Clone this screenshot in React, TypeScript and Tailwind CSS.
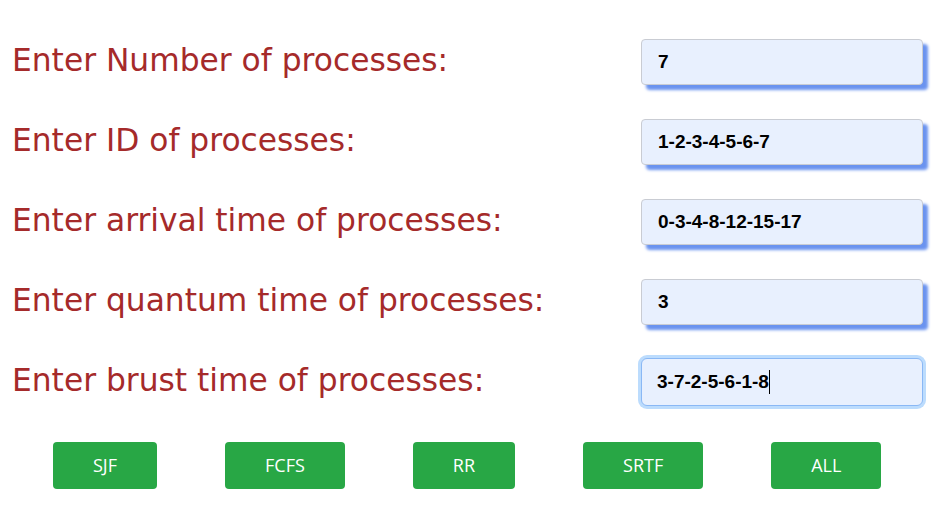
import React from "react";

const rows = [
  { label: "Enter Number of processes:", value: "7" },
  { label: "Enter ID of processes:", value: "1-2-3-4-5-6-7" },
  { label: "Enter arrival time of processes:", value: "0-3-4-8-12-15-17" },
  { label: "Enter quantum time of processes:", value: "3" },
  { label: "Enter brust time of processes:", value: "3-7-2-5-6-1-8", focused: true },
];

const buttons = ["SJF", "FCFS", "RR", "SRTF", "ALL"];

export default function App() {
  return (
    <div className="w-[944px] h-[505px] bg-white overflow-hidden pt-[39px]">
      {/* Form rows */}
      <div className="flex flex-col gap-[34px] pl-[12px] pr-[21px]">
        {rows.map((r) => (
          <div key={r.label} className="flex items-center justify-between h-[46px]">
            <label className="text-[31.3px] leading-none text-[#a52a2a] font-['DejaVu_Sans',Verdana,sans-serif] -mt-[3px]">
              {r.label}
            </label>
            {r.focused ? (
              <div className="w-[282px] h-[48px] rounded-[6px] ring-[3px] ring-[#bcdcfd] border border-[#8ab8f5] bg-[#e8f0fe] flex items-center pl-[15px]">
                <span className="text-[19px] font-bold text-black font-['Liberation_Sans',Arial,sans-serif]">
                  {r.value}
                </span>
                <span className="w-px h-[24px] bg-black" />
              </div>
            ) : (
              <div className="w-[282px] h-[46px] rounded-[4px] border border-[#c9ccd3] bg-[#e8f0fe] shadow-[5px_5px_3px_#6a93ef] flex items-center pl-[16px]">
                <span className="text-[19px] font-bold text-black font-['Liberation_Sans',Arial,sans-serif]">
                  {r.value}
                </span>
              </div>
            )}
          </div>
        ))}
      </div>

      {/* Algorithm buttons */}
      <div className="flex gap-[68px] pl-[53px] mt-[37px]">
        {buttons.map((b) => (
          <button
            key={b}
            className="h-[47px] px-[40px] rounded-[4px] bg-[#28a745] text-white text-[18px] font-['Open_Sans',sans-serif]"
          >
            {b}
          </button>
        ))}
      </div>
    </div>
  );
}
